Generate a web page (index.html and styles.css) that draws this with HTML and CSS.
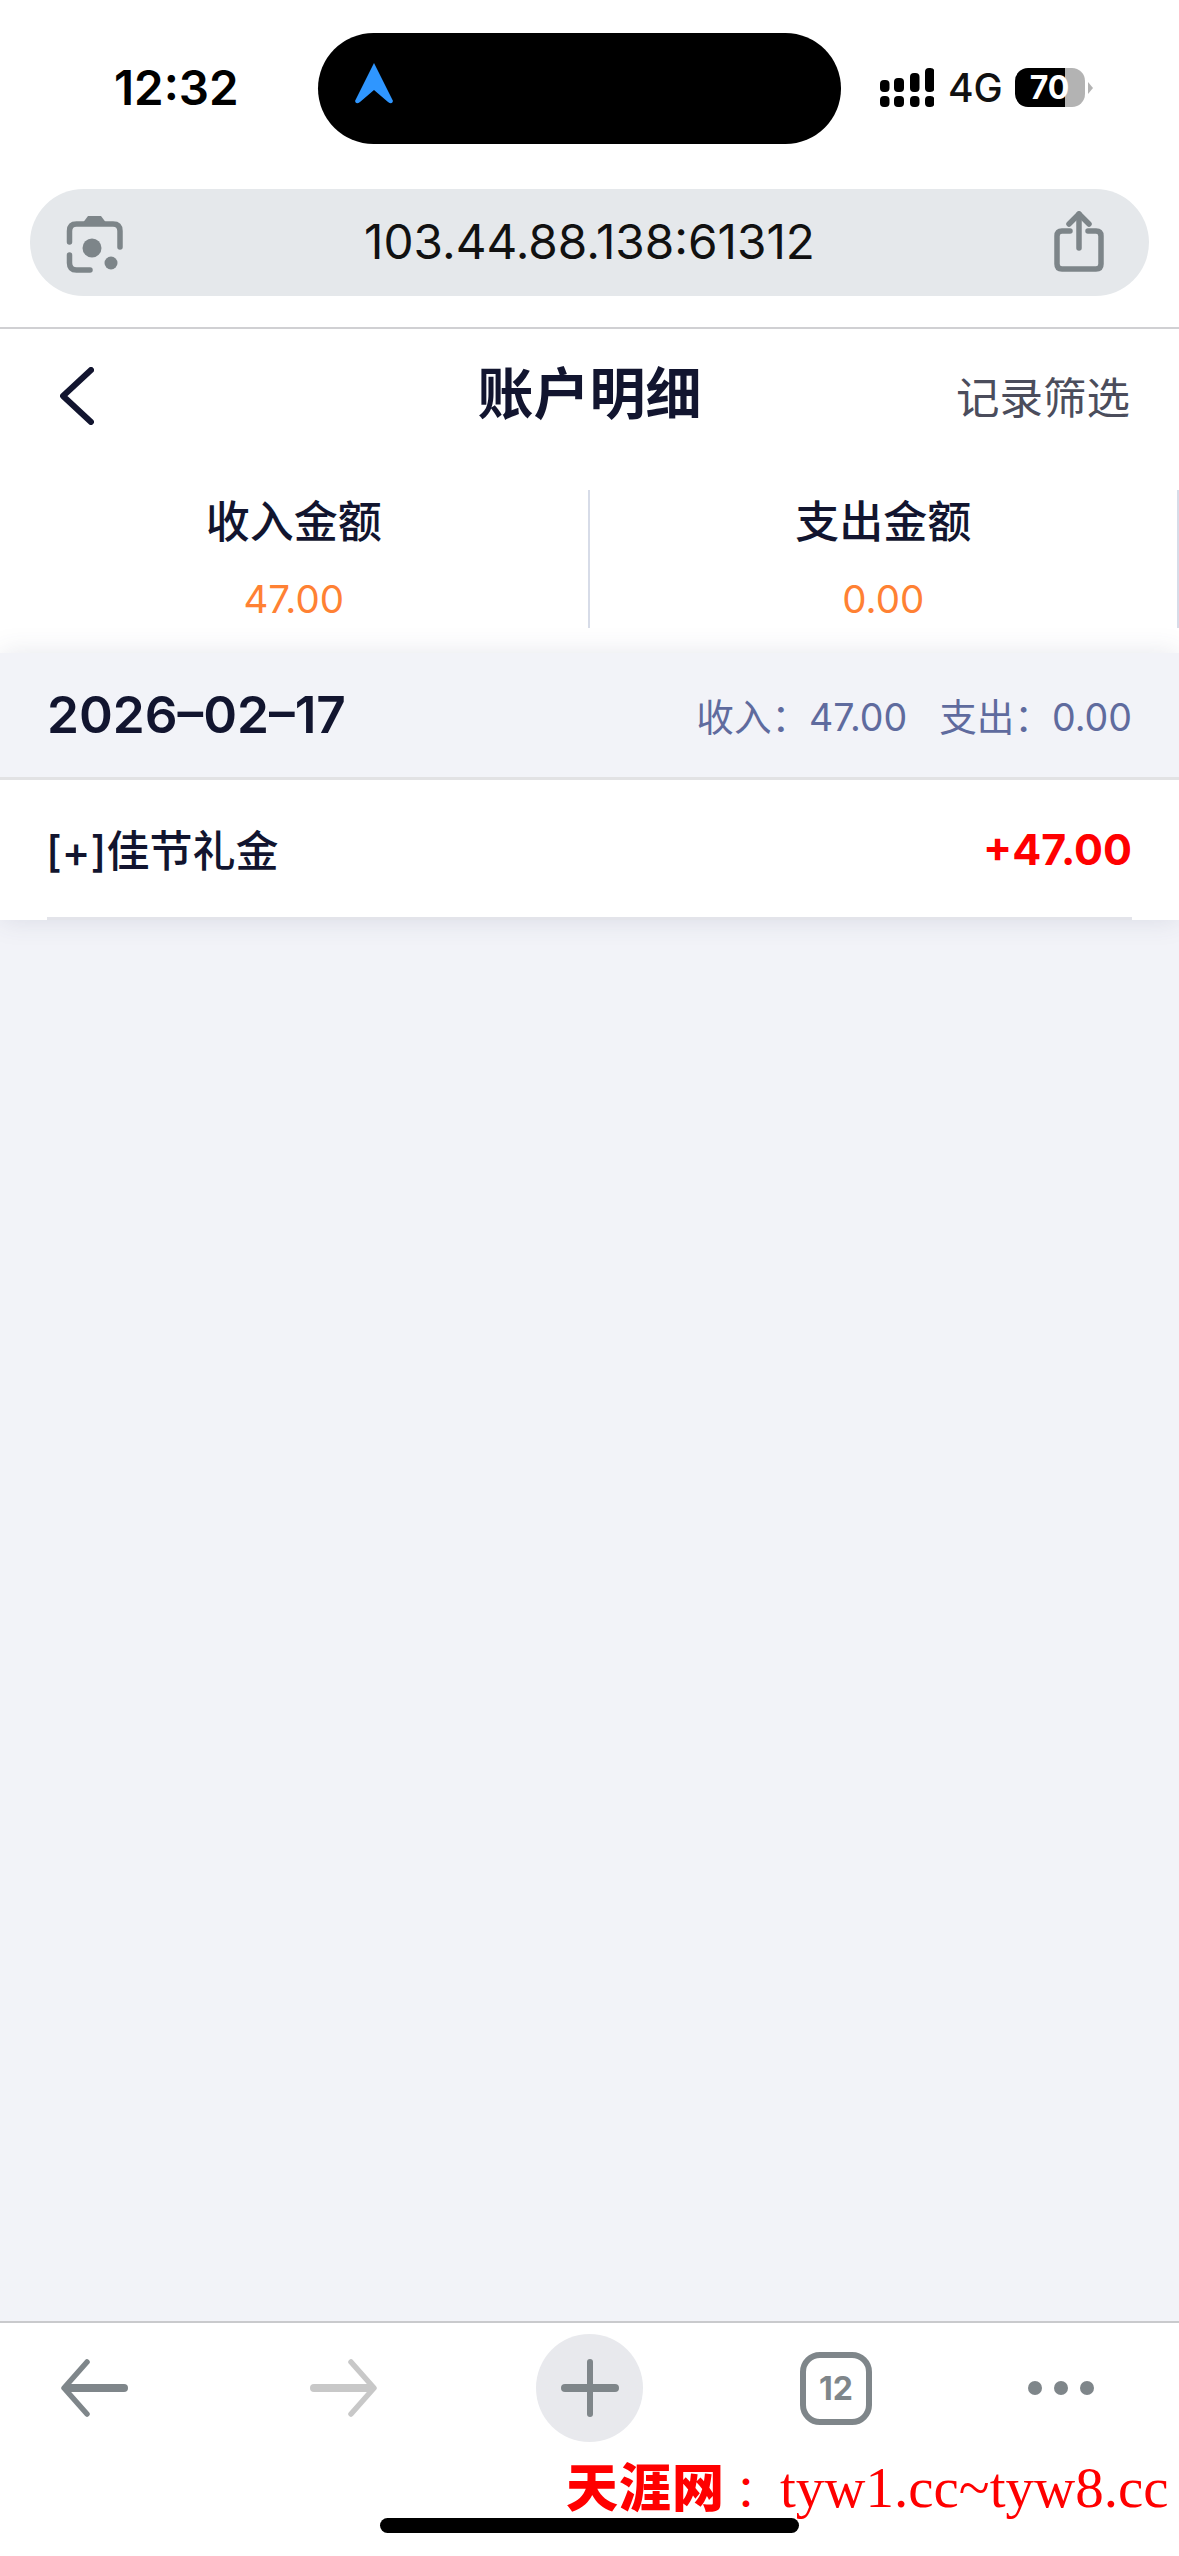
FILE: index.html
```html
<!DOCTYPE html>
<html lang="zh">
<head>
<meta charset="utf-8">
<title>账户明细</title>
<link rel="stylesheet" href="styles.css">
</head>
<body>
<div class="page">
  <header class="browser-top">
    <div class="status">
      <span class="time">12:32</span>
      <div class="island">
        <svg class="nav-arrow" width="38" height="41" viewBox="0 0 38 41"><path d="M19 0 L38 38 Q37 42 33 39 L19 27 L5 39 Q1 42 0 38 Z" fill="#2f96ff"/></svg>
      </div>
      <div class="status-right">
        <svg class="signal" width="54" height="39" viewBox="0 0 54 39" fill="#000">
          <rect x="0" y="12" width="9.5" height="12" rx="4"/><rect x="14" y="10" width="10" height="14" rx="4"/><rect x="30" y="5" width="9.5" height="19" rx="4"/><rect x="45" y="0" width="9.5" height="24" rx="4"/>
          <rect x="0" y="28" width="9.5" height="11" rx="4"/><rect x="14" y="28" width="10" height="11" rx="4"/><rect x="30" y="28" width="9.5" height="11" rx="4"/><rect x="45" y="28" width="9.5" height="11" rx="4"/>
        </svg>
        <span class="net">4G</span>
        <div class="battery"><span class="battery-num">70</span></div>
        <span class="battery-tip"></span>
      </div>
    </div>
    <div class="urlbar">
      <svg class="url-icon" width="70" height="70" viewBox="0 0 70 70" fill="none" stroke="#7d8589" stroke-width="5.5" stroke-linecap="round">
        <path d="M12.5 34 V23 Q12.5 16 19.5 16 H56 Q63 16 63 23 V39"/>
        <path d="M12.5 47 V55 Q12.5 62 19.5 62 H33"/>
        <path d="M25 16 L31 8 H44 L50 16 Z" fill="#7d8589" stroke="none"/>
        <circle cx="35" cy="40" r="9.5" fill="#7d8589" stroke="none"/>
        <circle cx="54" cy="55" r="6.5" fill="#7d8589" stroke="none"/>
      </svg>
      <span class="url">103.44.88.138:61312</span>
      <svg class="url-icon" width="70" height="70" viewBox="0 0 70 70" fill="none" stroke="#7d8589" stroke-width="5.5" stroke-linecap="round" stroke-linejoin="round">
        <path d="M26 23 H18 Q13 23 13 28 V56 Q13 61 18 61 H52 Q57 61 57 56 V28 Q57 23 52 23 H44"/>
        <path d="M35 6 V40"/>
        <path d="M25 16 L35 6 L45 16"/>
      </svg>
    </div>
  </header>

  <nav class="nav">
    <svg class="back" width="34" height="58" viewBox="0 0 34 58" fill="none" stroke="#12152f" stroke-width="6" stroke-linecap="round" stroke-linejoin="round"><path d="M31 3 L3 29 L31 55"/></svg>
    <h1 class="title">账户明细</h1>
    <span class="filter">记录筛选</span>
  </nav>

  <section class="summary">
    <div class="sum-col"><span class="sum-label">收入金额</span><span class="sum-value">47.00</span></div>
    <div class="sum-col"><span class="sum-label">支出金额</span><span class="sum-value">0.00</span></div>
  </section>

  <main class="content">
    <div class="list">
      <div class="day">
        <span class="day-date">2026–02–17</span>
        <span class="day-totals"><span>收入：47.00</span><span>支出：0.00</span></span>
      </div>
      <div class="record">
        <div class="record-inner">
          <span class="record-name">[+]佳节礼金</span>
          <span class="record-amount">+47.00</span>
        </div>
      </div>
    </div>
  </main>

  <footer class="browser-bottom">
    <div class="tools">
      <svg class="tool-back" width="70" height="58" viewBox="0 0 70 58" fill="none" stroke="#7f868a" stroke-width="5.5" stroke-linecap="round" stroke-linejoin="round"><path d="M27 3 L4 29 L27 55"/><path d="M7 29 H64" stroke-width="8"/></svg>
      <svg class="tool-forward" width="70" height="58" viewBox="0 0 70 58" fill="none" stroke="#c8c8c8" stroke-width="5.5" stroke-linecap="round" stroke-linejoin="round"><path d="M43 3 L66 29 L43 55"/><path d="M6 29 H63" stroke-width="8"/></svg>
      <div class="plus">
        <svg width="58" height="58" viewBox="0 0 58 58" fill="none" stroke="#7f868a" stroke-linecap="round"><path d="M29 3 V55" stroke-width="6"/><path d="M4 29 H54" stroke-width="8"/></svg>
      </div>
      <div class="tabs">12</div>
      <svg class="tool-more" width="70" height="16" viewBox="0 0 70 16" fill="#7f868a"><circle cx="9" cy="8" r="7"/><circle cx="35" cy="8" r="7"/><circle cx="61" cy="8" r="7"/></svg>
    </div>
    <div class="watermark"><span class="wm-cn">天涯网</span><span class="wm-colon">：</span><span class="wm-en">tyw1.cc~tyw8.cc</span></div>
    <div class="home"></div>
  </footer>
</div>
</body>
</html>
```
FILE: styles.css
```css
* { box-sizing: border-box; }
html, body { margin: 0; padding: 0; }
body { font-family: Inter, "Noto Sans CJK SC", sans-serif; background: #fff; }
.page { width: 1179px; height: 2556px; display: flex; flex-direction: column; overflow: hidden; position: relative; }

.browser-top { height: 329px; padding-top: 33px; border-bottom: 2px solid #d0d0d3; background: #fff; flex: none; }
.status { height: 156px; display: flex; align-items: flex-start; padding-left: 114px; }
.time { width: 204px; height: 111px; line-height: 109px; font-size: 47.5px; font-weight: 600; color: #000; }
.island { width: 523px; height: 111px; background: #000; border-radius: 56px; display: flex; align-items: center; padding-left: 37px; }
.nav-arrow { transform: translateY(-5px); }
.status-right { display: flex; align-items: center; height: 39px; margin-top: 35px; margin-left: 39px; }
.net { font-size: 39px; font-weight: 500; color: #111; margin-left: 14px; width: 67px; line-height: 39px; }
.battery { width: 70px; height: 39px; border-radius: 13px; background: linear-gradient(to right, #000 71%, #b3b3b3 71%); text-align: center; }
.battery-num { font-size: 32px; font-weight: 700; color: #fff; line-height: 39px; display: block; margin-right: 1px; }
.battery-tip { width: 0; height: 0; border-left: 5px solid #b3b3b3; border-top: 6px solid transparent; border-bottom: 6px solid transparent; margin-left: 3px; }

.urlbar { margin: 0 30px; height: 107px; background: #e5e8eb; border-radius: 54px; display: flex; align-items: center; padding: 0 35px 0 27px; }
.url { flex: 1; font-size: 47.7px; color: #111; line-height: 107px; text-align: center; padding-left: 8px; }
.url-icon { flex: none; }

.nav { height: 161px; flex: none; display: flex; align-items: center; justify-content: space-between; padding: 0 49px 0 60px; position: relative; background: #fff; }
.back { margin-top: -28px; }
.title { margin: 0; position: absolute; left: 0; right: 0; top: 30px; text-align: center; font-size: 56px; line-height: 70px; font-weight: 700; color: #12152f; }
.filter { font-size: 43.5px; color: #4b4d5c; margin-top: -28px; }

.summary { height: 138px; flex: none; display: flex; background: #fff; }
.sum-col { width: 589.5px; border-right: 2px solid #d7dce8; display: flex; flex-direction: column; align-items: center; }
.sum-label { font-size: 44px; line-height: 60px; font-weight: 500; color: #12152f; margin-top: 2px; }
.sum-value { font-size: 38.5px; line-height: 44px; color: #ff8133; margin-top: 25px; }

.content { flex: 1; background: #f2f3f8; margin-top: 25px; position: relative; }
.list { background: #fff; box-shadow: 0 0 26px rgba(60, 70, 110, .13); }
.day { height: 127px; background: #f2f3f8; border-bottom: 3px solid #e2e2e4; display: flex; align-items: center; justify-content: space-between; padding: 0 47px; }
.day-date { font-size: 51.3px; font-weight: 600; color: #12152f; margin-top: -2px; }
.day-totals { display: flex; gap: 32px; font-size: 37.6px; color: #5f6b9e; margin-top: -2px; }
.record { background: #fff; height: 140px; padding: 0 47px; }
.record-inner { height: 140px; border-bottom: 3px solid #e3e4ea; display: flex; align-items: center; justify-content: space-between; }
.record-name { font-size: 43px; color: #12152f; font-weight: 500; margin-top: -2px; margin-left: -1px; }
.record-amount { font-size: 43px; color: #ff0000; font-weight: 700; }

.browser-bottom { height: 235px; flex: none; background: #fff; border-top: 2px solid #c9cacd; position: relative; }
.tools { height: 130px; display: flex; align-items: center; padding-left: 60px; }
.tool-forward { margin-left: 178px; }
.plus { width: 107px; height: 108px; margin-left: 158px; border-radius: 50%; background: #e8e9ed; display: flex; align-items: center; justify-content: center; flex: none; }
.tabs { width: 72px; height: 73px; margin-left: 157px; border: 6px solid #7f868a; border-radius: 20px; color: #7f868a; font-size: 32px; font-weight: 700; display: flex; align-items: center; justify-content: center; flex: none; }
.tool-more { margin-left: 154px; }
.watermark { position: absolute; left: 566px; top: 132px; display: flex; align-items: baseline; color: #ff0000; white-space: nowrap; line-height: 60px; }
.wm-cn { font-family: "Noto Sans CJK SC", sans-serif; font-weight: 900; font-size: 52px; letter-spacing: 1px; }
.wm-colon { font-family: "Noto Sans CJK SC", sans-serif; font-weight: 400; font-size: 44px; width: 55px; padding-left: 10px; }
.wm-en { font-family: "Liberation Serif", serif; font-size: 57px; }
.home { position: absolute; left: 380px; top: 195px; width: 419px; height: 15px; border-radius: 8px; background: #000; }
```
